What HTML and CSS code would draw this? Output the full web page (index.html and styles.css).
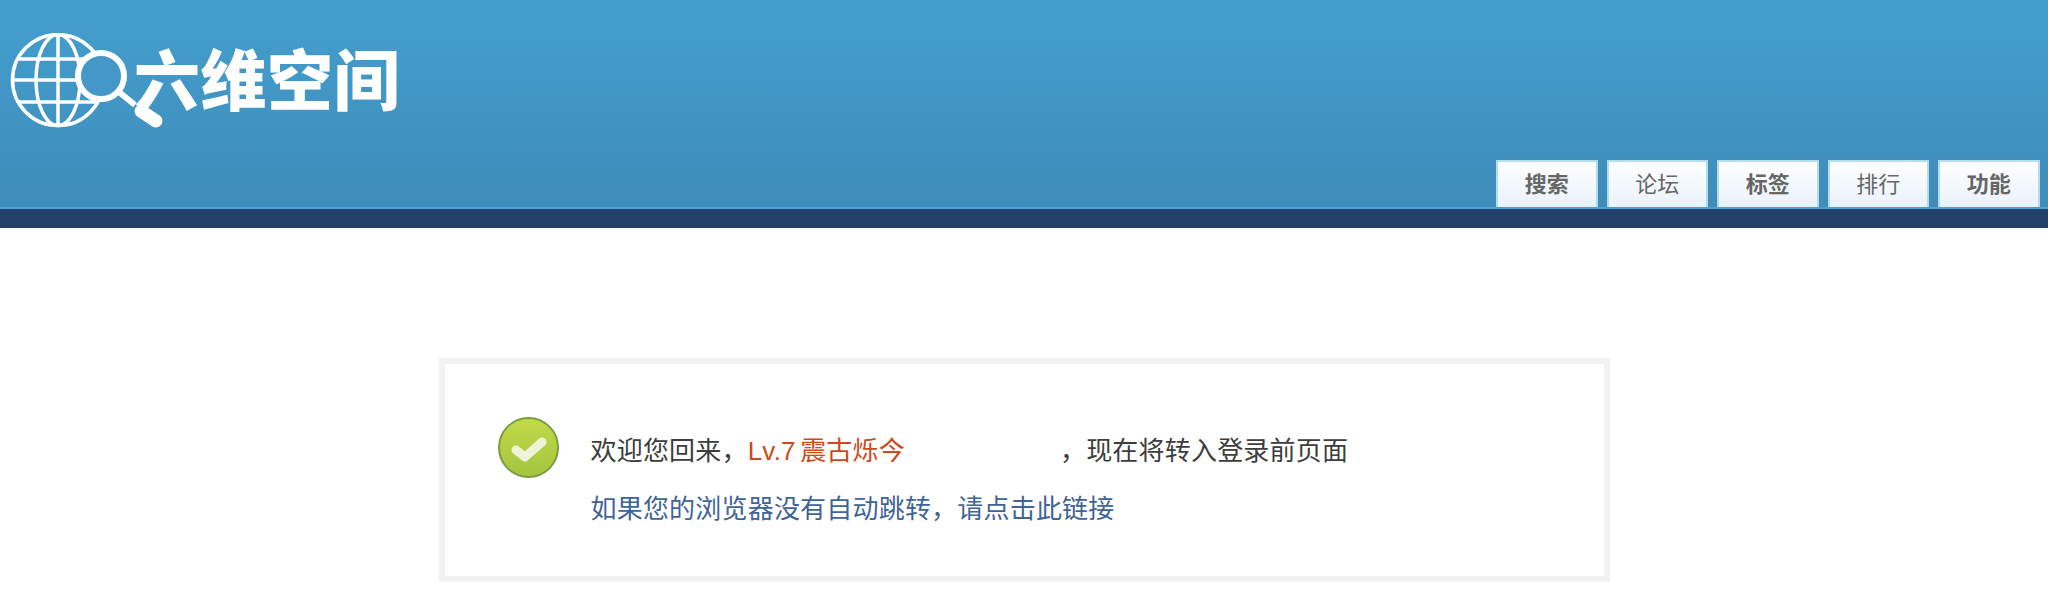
FILE: index.html
```html
<!DOCTYPE html>
<html lang="zh-CN">

<head>
    <meta charset="UTF-8">
    <title>六维空间</title>
    <link rel="stylesheet" href="styles.css">
</head>

<body>
    <div class="header">
        <a class="logo" href="#">
            <svg class="logo-mark" width="164" height="100" viewBox="0 0 164 100" fill="none" stroke="#fff" stroke-width="3.5">
                <!-- globe -->
                <circle cx="48" cy="47" r="45.5" />
                <ellipse cx="48" cy="47" rx="22" ry="45.5" />
                <path d="M48 2v90M2.500 47h91M9 26h78M9 69h78" />
                <!-- magnifier -->
                <circle cx="91" cy="43" r="23" fill="#4398c8" stroke-width="6" />
                <path d="M109 59l16 13" stroke-width="6" />
                <path d="M131 78l15 10" stroke-width="13" stroke-linecap="round" />
            </svg>
            <span class="logo-text">六维空间</span>
        </a>
        <div class="nav">
            <a class="nav-item bold" href="#">搜索</a>
            <a class="nav-item" href="#">论坛</a>
            <a class="nav-item bold" href="#">标签</a>
            <a class="nav-item" href="#">排行</a>
            <a class="nav-item bold" href="#">功能</a>
        </div>
    </div>
    <div class="header-bar"></div>

    <div class="message">
        <svg class="message-icon" width="61" height="61" viewBox="0 0 61 61">
            <defs>
                <linearGradient id="ok" x1="0" y1="0" x2="0" y2="1">
                    <stop offset="0" stop-color="#c4da4a" />
                    <stop offset="1" stop-color="#a3c440" />
                </linearGradient>
            </defs>
            <circle cx="30.5" cy="30.5" r="29.5" fill="url(#ok)" stroke="#7c9c3e" stroke-width="2" />
            <path d="M18 33l9 7 17-15" fill="none" stroke="#eff3d8" stroke-width="9" stroke-linecap="round" stroke-linejoin="round" />
        </svg>
        <div class="message-text">
            <p>欢迎您回来，<span class="user">Lv.7 震古烁今</span><span class="user-blank"></span>，现在将转入登录前页面</p>
            <p><a class="link" href="#">如果您的浏览器没有自动跳转，请点击此链接</a></p>
        </div>
    </div>
</body>

</html>
```
FILE: styles.css
```css
body {
    margin: 0;
    background-color: #fff;
    font-family: "Liberation Sans", "Noto Sans CJK SC", sans-serif;
    overflow: hidden;
}

a {
    text-decoration: none;
}

.header {
    height: 207px;
    display: flex;
    justify-content: space-between;
    background: linear-gradient(#449fce, #3e8cba);
    border-bottom: 2px solid #4c9fd6;
}

.header-bar {
    height: 19px;
    background-color: #234069;
}

.logo {
    display: flex;
    align-items: flex-start;
    padding: 33px 0 0 10px;
}

.logo-mark {
    flex-shrink: 0;
}

.logo-text {
    margin: 11px 0 0 -40px;
    color: #fff;
    font-size: 66px;
    font-weight: 900;
    line-height: 76px;
    letter-spacing: 0.5px;
    white-space: nowrap;
}

.nav {
    display: flex;
    align-self: flex-end;
    gap: 9px;
    padding-right: 8.5px;
}

.nav-item {
    width: 101.5px;
    height: 47px;
    box-sizing: border-box;
    border: 2px solid #b4dcea;
    border-bottom: none;
    background: linear-gradient(#fff, #e9f2fb);
    color: #666;
    font-size: 22px;
    line-height: 46px;
    text-align: center;
}

.bold {
    font-weight: bold;
}

.message {
    width: 1171px;
    height: 224px;
    box-sizing: border-box;
    margin: 130px auto 0;
    padding: 58px 52px 0 53px;
    border: 6px solid #f2f2f2;
    display: flex;
    align-items: flex-start;
    gap: 32px;
}

.message-icon {
    flex-shrink: 0;
    margin-top: -5px;
}

.message-text {
    font-size: 26px;
    letter-spacing: 0.2px;
    line-height: 58px;
    color: #3d3d3d;
}

.message-text p {
    margin: 0;
}

.user {
    color: #cc4a1c;
    word-spacing: -3px;
}

.user-blank {
    display: inline-block;
    width: 155px;
}

.link {
    color: #3f6496;
}
```
